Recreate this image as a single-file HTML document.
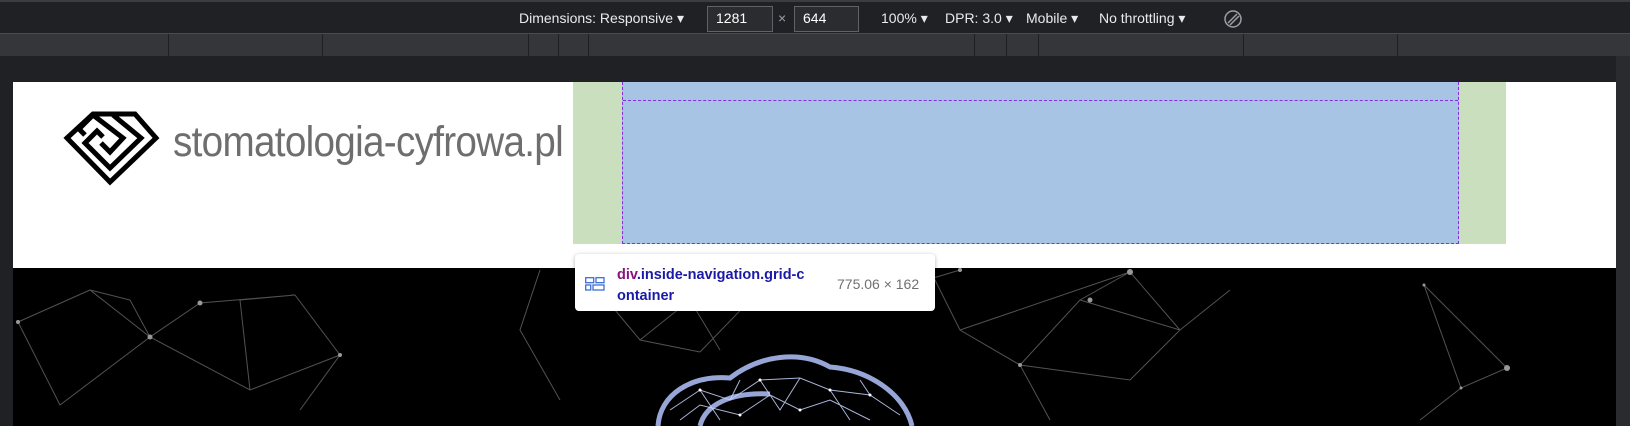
<!DOCTYPE html>
<html><head><meta charset="utf-8"><style>
*{margin:0;padding:0;box-sizing:border-box}
body{width:1630px;height:426px;background:#202124;position:relative;overflow:hidden;font-family:"Liberation Sans",sans-serif}
.top{position:absolute;left:0;top:0;width:1630px;height:34px;background:#202124;border-top:2px solid #3c3d41;border-bottom:1px solid #4a4b4f;color:#e8eaed;font-size:14px}
.top span{position:absolute;top:8px}
.inp{position:absolute;top:4px;height:26px;border:1px solid #5f6368;background:#2b2c30;color:#fff;font-size:14px;padding:3px 8px}
.ruler{position:absolute;left:0;top:34px;width:1630px;height:22px;background:#35363a}
.ruler i{position:absolute;top:0;width:1px;height:22px;background:#1e1f22}
.page{position:absolute;left:13px;top:82px;width:1603px;height:186px;background:#fff}
.dark{position:absolute;left:13px;top:268px;width:1603px;height:158px;background:#000}
.rstrip{position:absolute;left:1616px;top:56px;width:14px;height:370px;background:#2a2b2f}
.tip{position:absolute;left:575px;top:254px;width:360px;height:57px;background:#fff;border-radius:4px;box-shadow:0 1px 4px rgba(0,0,0,.3);font-family:"Liberation Sans",sans-serif}
</style></head><body>
<div class="top">
<span style="left:519px">Dimensions: Responsive ▾</span>
<div class="inp" style="left:707px;width:66px">1281</div>
<span style="left:778px;color:#9aa0a6">×</span>
<div class="inp" style="left:794px;width:65px">644</div>
<span style="left:881px">100% ▾</span>
<span style="left:945px">DPR: 3.0 ▾</span>
<span style="left:1026px">Mobile ▾</span>
<span style="left:1099px">No throttling ▾</span>
<svg style="position:absolute;left:1222px;top:6px" width="22" height="22" viewBox="0 0 22 22"><circle cx="11" cy="11" r="8" fill="none" stroke="#9aa0a6" stroke-width="1.5"/><path d="M6 15L15 6M8 17l9-9" stroke="#9aa0a6" stroke-width="1.5"/></svg>
</div>
<div class="ruler"><i style="left:168px"></i><i style="left:322px"></i><i style="left:528px"></i><i style="left:558px"></i><i style="left:588px"></i><i style="left:974px"></i><i style="left:1006px"></i><i style="left:1038px"></i><i style="left:1243px"></i><i style="left:1397px"></i></div>
<div class="page">
<svg style="position:absolute;left:50px;top:27px" width="100" height="77" viewBox="50 27 100 77">
<g fill="none" stroke="#000" stroke-width="5" stroke-linejoin="miter">
<path d="M80 32H122L143 56L97 100L54 56Z"/>
<path d="M100 33L128 56L97 86L72 61L84 49L90 55"/>
<path d="M80 33L110 56L97 70L88 61"/>
<path d="M80 33L66 47L72 53"/>
</g></svg>
<div style="position:absolute;left:160px;top:36px;font-size:43px;color:#555;letter-spacing:-0.8px;transform:scaleX(0.9);transform-origin:left;white-space:nowrap;opacity:.85">stomatologia-cyfrowa.pl</div>
<div style="position:absolute;left:560px;top:0;width:933px;height:162px;background:#c9dfbd"></div>
<div style="position:absolute;left:609px;top:0;width:837px;height:162px;background:#a8c4e5;border-left:1px dashed #8a2be2;border-right:1px dashed #8a2be2;border-bottom:1px dashed #8a2be2"></div>
<div style="position:absolute;left:610px;top:18px;width:835px;border-top:1px dashed #8a2be2"></div>
</div>
<div class="dark"></div>
<svg style="position:absolute;left:13px;top:268px" width="1603" height="158" viewBox="13 268 1603 158">
<g stroke="#666" stroke-width="1" fill="none" opacity=".8">
<path d="M18 322L90 290L150 337L200 303L295 295L340 355L300 410M18 322L60 405L150 337L130 300L90 290M200 303L150 337L250 390L340 355M60 405L150 337M240 300L250 390M295 295L240 300"/>
<path d="M540 270L520 330L560 400M590 280L640 340L700 352M640 340L690 300L720 350M520 330L560 400"/>
<path d="M930 270L960 330L1020 365L1050 420M960 330L1130 272L1080 300L1020 365M1130 272L1180 330L1130 380L1020 365M1180 330L1230 290M1080 300L1180 330"/>
<path d="M1424 285L1507 368L1461 388L1424 285M1461 388L1420 420"/>
<path d="M700 352L760 290L860 300L960 270"/>
</g>
<g fill="#999"><circle cx="18" cy="322" r="2"/><circle cx="150" cy="337" r="2.5"/><circle cx="200" cy="303" r="2.5"/><circle cx="340" cy="355" r="2"/><circle cx="1130" cy="272" r="3"/><circle cx="1507" cy="368" r="3"/><circle cx="1424" cy="285" r="1.5"/><circle cx="1461" cy="388" r="1.5"/><circle cx="1020" cy="365" r="2"/><circle cx="960" cy="270" r="2"/><circle cx="1090" cy="300" r="2.5"/></g>
<g fill="none" stroke="#a8b8ee" stroke-width="5" opacity=".9">
<path d="M658 426C660 395 690 375 730 378C760 355 800 350 830 367C870 370 905 395 912 426"/>
<path d="M700 426C705 405 730 392 770 394"/>
</g>
<g stroke="#c8d4ff" stroke-width="1" fill="none" opacity=".85"><path d="M670 410L700 390L730 400L760 380L800 378L830 390L870 395L900 415M700 390L720 420M760 380L780 410L800 378M830 390L850 420M680 420L700 405L740 415L770 395L800 410L830 400L870 420M740 380L730 400M860 380L870 395"/></g>
<g fill="#fff"><circle cx="700" cy="390" r="1.5"/><circle cx="760" cy="380" r="1.5"/><circle cx="830" cy="390" r="1.5"/><circle cx="870" cy="395" r="1.5"/><circle cx="740" cy="415" r="1.5"/><circle cx="800" cy="410" r="1.5"/></g>
</svg>
<div class="rstrip"></div>
<svg style="position:absolute;left:565px;top:244px" width="22" height="11"><path d="M2 11L11 2L20 11Z" fill="#fff"/></svg>
<div class="tip">
<svg style="position:absolute;left:10px;top:23px" width="20" height="14" viewBox="0 0 20 14"><g fill="none" stroke="#3b6fd8" stroke-width="1.3"><rect x=".7" y=".7" width="8" height="5"/><rect x="11" y=".7" width="8" height="5"/><rect x=".7" y="8" width="5" height="5"/><rect x="8" y="8" width="11" height="5"/></g></svg>
<div style="position:absolute;left:42px;top:11px;font-size:14.5px;font-weight:bold;color:#1a1aa6;line-height:21px;width:220px">
<span style="color:#881280">div</span>.inside-navigation.grid-c<br>ontainer</div>
<div style="position:absolute;left:262px;top:22px;font-size:14px;color:#707070">775.06 × 162</div>
</div>
</body></html>
